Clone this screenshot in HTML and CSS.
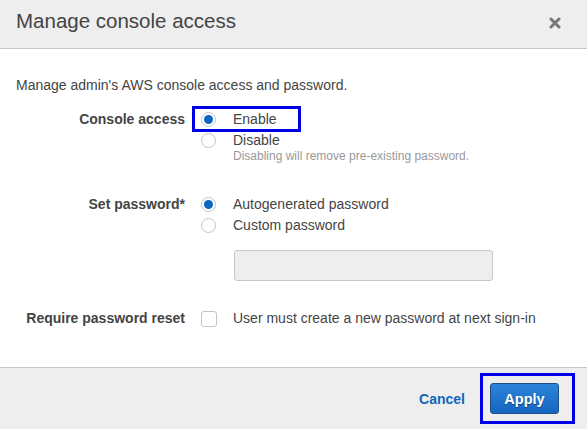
FILE: index.html
```html
<!DOCTYPE html>
<html>
<head>
<meta charset="utf-8">
<link rel="stylesheet" href="styles.css">
</head>
<body>
<div class="modal">
  <div class="header">
    <h1 class="title">Manage console access</h1>
    <svg class="close" width="12" height="12" viewBox="0 0 12 12"><path d="M2 2 L10 10 M10 2 L2 10" stroke="#777" stroke-width="3" stroke-linecap="round"/></svg>
  </div>
  <div class="body">
    <p class="desc">Manage admin's AWS console access and password.</p>
    <div class="row row-access">
      <div class="label">Console access</div>
      <div class="opts">
        <div class="opt hl"><span class="radio on"></span><span>Enable</span></div>
        <div class="opt"><span class="radio"></span><span>Disable</span></div>
        <div class="hint">Disabling will remove pre-existing password.</div>
      </div>
    </div>
    <div class="row row-pass">
      <div class="label">Set password*</div>
      <div class="opts">
        <div class="opt"><span class="radio on"></span><span>Autogenerated password</span></div>
        <div class="opt"><span class="radio"></span><span>Custom password</span></div>
        <div class="input"></div>
      </div>
    </div>
    <div class="row row-reset">
      <div class="label">Require password reset</div>
      <div class="opts">
        <div class="opt"><span class="check"></span><span>User must create a new password at next sign-in</span></div>
      </div>
    </div>
  </div>
  <div class="footer">
    <span class="cancel">Cancel</span>
    <div class="apply-hl"><button class="apply">Apply</button></div>
  </div>
</div>
</body>
</html>
```
FILE: styles.css
```css
* { box-sizing: border-box; }
html, body { margin: 0; padding: 0; }
body {
  width: 587px;
  height: 429px;
  background: #fff;
  font-family: "Liberation Sans", Arial, sans-serif;
  color: #444;
  font-size: 14px;
  overflow: hidden;
}
.modal { display: flex; flex-direction: column; height: 429px; }
.header {
  height: 49px;
  background: #eeeeee;
  border-bottom: 1px solid #c8c8c8;
  display: flex;
  align-items: center;
  justify-content: space-between;
  padding: 0 26px 7px 16px;
}
.title {
  margin: 0;
  font-size: 20.5px;
  font-weight: normal;
  color: #444;
  line-height: 24px;
}
.close { display: block; margin-top: 5px; }
.body { flex: 1; padding: 28px 16px 0 16px; }
.desc { margin: 0 0 15px 0; line-height: 17px; }
.row { display: flex; align-items: flex-start; }
.label {
  width: 169px;
  text-align: right;
  font-weight: bold;
  line-height: 21px;
  margin-right: 16px;
}
.opts { display: flex; flex-direction: column; }
.opt { display: flex; align-items: center; height: 21px; line-height: 21px; }
.opt.hl { outline: 3px solid #0000e6; outline-offset: -1px; margin-left: -7px; padding-left: 7px; width: 105px; height: 22px; margin-top: -1px; }
.radio {
  width: 15px; height: 15px;
  border: 1px solid #c4c4c4;
  border-radius: 50%;
  background: #fff;
  margin-right: 17px;
  flex: none;
  position: relative;
}
.radio.on::after {
  content: "";
  position: absolute;
  left: 2px; top: 2px;
  width: 9px; height: 9px;
  border-radius: 50%;
  background: #0d66c2;
}
.check {
  width: 16px; height: 16px;
  border: 1px solid #c4c4c4;
  border-radius: 3px;
  background: #fff;
  margin-right: 16px;
  flex: none;
}
.hint { font-size: 12px; color: #999; margin-left: 32px; line-height: 12px; margin-top: -1px; }
.row-pass { margin-top: 32px; }
.input {
  margin-top: 14px;
  margin-left: 33px;
  width: 259px;
  height: 31px;
  background: #eeeeee;
  border: 1px solid #c8c8c8;
  border-radius: 3px;
}
.row-reset { margin-top: 27px; }
.footer {
  height: 62px;
  background: #eeeeee;
  border-top: 1px solid #c8c8c8;
  display: flex;
  align-items: center;
  justify-content: flex-end;
  padding: 0 12px 0 0;
}
.cancel { color: #1166bb; font-weight: bold; font-size: 14px; margin-right: 15px; }
.apply-hl {
  border: 3px solid #0000e6;
  width: 95px; height: 51px;
  display: flex; align-items: center; justify-content: flex-start;
  padding-left: 7px;
}
.apply {
  width: 69px; height: 31px;
  border: 1px solid #1d4e8a;
  border-radius: 3px;
  background: linear-gradient(#2c84d9, #1566c0);
  color: #fff;
  font-family: "Liberation Sans", Arial, sans-serif;
  font-weight: bold;
  font-size: 14.5px;
  text-shadow: 0 1px 1px rgba(0,0,0,0.4);
}
```
